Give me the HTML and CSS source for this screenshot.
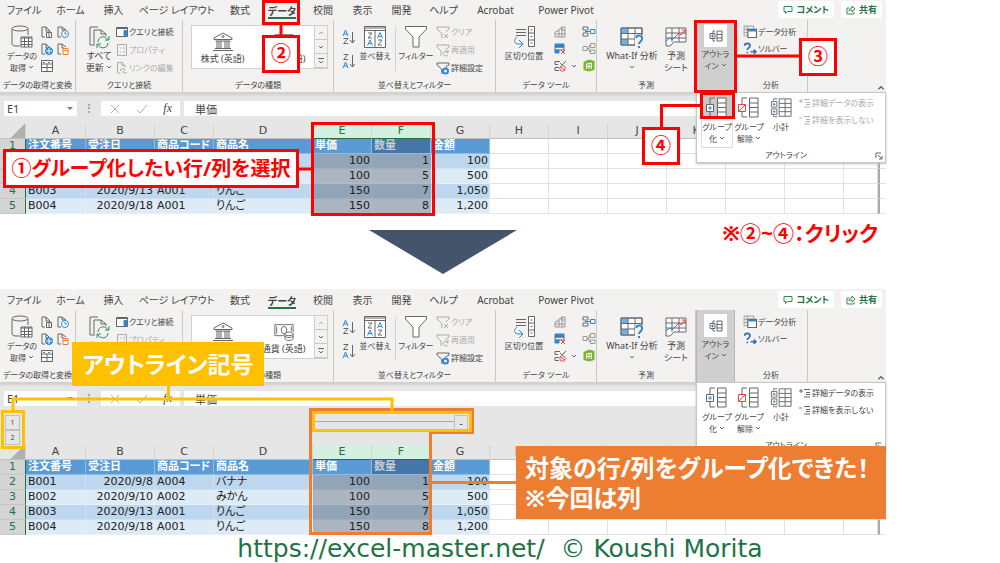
FILE: index.html
```html
<!DOCTYPE html>
<html lang="ja">
<head>
<meta charset="utf-8">
<title>Excel グループ化</title>
<link rel="stylesheet" href="styles.css">
</head>
<body>
<svg class="sprite" aria-hidden="true">
  <symbol id="i-chev" viewBox="0 0 6 6"><path d="M1 2l2 2 2-2"/></symbol>
  <symbol id="i-db" viewBox="0 0 24 24"><path d="M10 21H6c-3 0-4-1-4-3V4M18 4v6" /><ellipse cx="10" cy="3.500" rx="8" ry="2.500"/><path class="w" d="M11 12h11v10H11z"/><path d="M11 13h11M11 16.500h11M11 19.500h11M14.500 12v10M18.500 12v10"/></symbol>
  <symbol id="i-doc" viewBox="0 0 12 12"><path d="M4 11H1V1h4l4 4v1M5 1v4h4"/><path class="w" d="M5.500 6.500h5v5h-5zM7 8h2M7 10h2"/></symbol>
  <symbol id="i-docclock" viewBox="0 0 12 12"><path d="M4 11H1V1h4l4 3M5 1v3h3"/><circle class="bl w" cx="8" cy="8" r="3.500"/><path class="bl" d="M8 6v2h2"/></symbol>
  <symbol id="i-docweb" viewBox="0 0 12 12"><path d="M4 11H1V1h4l4 4M5 1v4h4"/><circle class="fb" cx="8" cy="8" r="3.500"/><path class="wl" d="M5 8h6M8 5v6"/></symbol>
  <symbol id="i-docdb" viewBox="0 0 12 12"><path d="M4 11H1V1h4l4 3M5 1v4h2"/><path class="or w" d="M6 5.500h5v6H6zM6 7.500h5"/></symbol>
  <symbol id="i-grid" viewBox="0 0 12 12"><path class="w" d="M.5.5h11v11H.5z"/><path d="M.5 4h11M.5 7.500h11M6 4v7.500"/><path class="bl" d="M2 2.500h2M7 2.500h2"/></symbol>
  <symbol id="i-refresh" viewBox="0 0 24 24"><path d="M6 20H3V2h8M7 21V5h7l5 4v2M14 5v4h5"/><path class="gr" d="M11 17c0-6 8-7 10-2M22 11v4h-4M21 18c0 6-8 6-10 2M10 23v-4h4"/></symbol>
  <symbol id="i-pane" viewBox="0 0 12 12"><path class="w" d="M.5 1.500h11v9H.5z"/><path d="M.5 2.500h11"/><path class="fb" d="M8 4.500h2.500v5H8z"/></symbol>
  <symbol id="i-prop" viewBox="0 0 12 12"><path d="M1.500.5h9v11h-9zM4 4h1M4 8h1M7 4h2M7 8h2"/></symbol>
  <symbol id="i-link" viewBox="0 0 12 12"><path d="M4 11H1.500V.5H6l3 3v2M6 .5v3h3M5 9a2 1.500 0 1 1 3 0M7 9a2 1.500 0 1 0 4 1"/></symbol>
  <symbol id="i-bank" viewBox="0 0 22 20"><path d="M2 6l9-5 9 5v1.500H2zM3.500 9h15M5 9v7M9 9v7M13 9v7M17 9v7M3 16.500h16M1 18.500h20M7 9v7M15 9v7"/><circle cx="11" cy="4.500" r="1"/></symbol>
  <symbol id="i-money" viewBox="0 0 24 20"><path d="M12 14H2V2h20v8M4 4v8M20 4v5"/><ellipse cx="12" cy="8" rx="3" ry="4"/><path class="w" d="M13 12v5c0 3 9 3 9 0v-5"/><ellipse class="w" cx="17.500" cy="12" rx="4.500" ry="2"/><path d="M13 14.500c1 2 8 2 9 0"/></symbol>
  <symbol id="i-az" viewBox="0 0 14 16"><path class="bl" d="M1 7l2.500-6L6 7M2 5h3"/><path d="M1.500 9.500H6l-4.500 5H6M10.500 3v11M8 11l2.500 3 2.500-3"/></symbol>
  <symbol id="i-za" viewBox="0 0 14 16"><path class="bl" d="M1 15l2.500-6L6 15M2 13h3"/><path d="M1.500 1.500H6l-4.500 5H6M10.500 2v12M8 11l2.500 3 2.500-3"/></symbol>
  <symbol id="i-sort" viewBox="0 0 22 22"><path class="w" d="M.5.5h21v21H.5z"/><path d="M.5 2h21M.5 4.500h21M11 4v17M4 7h4l-4 5h4M14 14h4l-4 5h4"/><path class="bl" d="M3.500 19.500L6 14l2.500 5.500M4.500 17.500h3M13.500 12L16 6.500l2.500 5.500M14.500 10.500h3"/></symbol>
  <symbol id="i-filter" viewBox="0 0 24 24"><path class="w" d="M1.500 1.500h21V4L15 12v10H9V12L1.500 4z"/></symbol>
  <symbol id="i-fclear" viewBox="0 0 14 13"><path d="M6 12L5.500 7 1 3V1h12v2L9.500 6M8 8l4 4M12 8l-4 4"/></symbol>
  <symbol id="i-fre" viewBox="0 0 14 13"><path d="M5 12V7L1 3V1h12v2L9.500 5.500M12 8a2.500 2.500 0 1 0 0 3M12 6v2.500h-2"/></symbol>
  <symbol id="i-fset" viewBox="0 0 14 13"><path d="M6 12L5.500 7 1 3V1h12v2L9.500 5"/><circle class="bl2" cx="9.500" cy="9" r="2.500"/></symbol>
  <symbol id="i-split" viewBox="0 0 24 24"><path d="M4 4.500h10M4 7.500h10M4 10.500h10"/><path class="w" d="M16.500 1.500h6v20h-6zM16.500 8h6M16.500 15h6"/><path d="M18.500 5h2M18.500 11.500h2M18.500 18h2"/><path class="bl" d="M5 12c-4 3-3 7 2 7h3M7 15l4 4-4 4"/></symbol>
  <symbol id="i-flash" viewBox="0 0 12 12"><path class="md" d="M4 4L8 1l-1 3h4v7H1V6l3-1zM1 8h10M5 4v7M8 1v10M8 1h3v3"/></symbol>
  <symbol id="i-dup" viewBox="0 0 12 12"><path class="fb" d="M1 1h9v3H1z"/><path d="M1 4h9v3H1z"/><path class="fb" d="M1 7h4v3H1z"/><path class="rd" d="M7 7l4 4M11 7l-4 4"/></symbol>
  <symbol id="i-valid" viewBox="0 0 12 12"><path d="M6 1.500H1v3h3M5 7.500H1v3h4"/><path class="gr" d="M6 3l2 2 4-4"/><circle class="rd w" cx="8.500" cy="8.500" r="2.700"/><path class="rd" d="M6.500 7l4 3"/></symbol>
  <symbol id="i-merge" viewBox="0 0 14 12"><path class="w" d="M1 1.500h5v3H1zM1 7.500h5v3H1z"/><path class="bl" d="M8.500 4h4.500v4H8.500zM3 6h5"/></symbol>
  <symbol id="i-rel" viewBox="0 0 14 12"><path class="md" d="M1 4h4v4H1zM8.500 1H13v4H8.500zM8.500 7.500H13V11H8.500zM5 6h2V3h1.500M7 6v3h1.500"/></symbol>
  <symbol id="i-model" viewBox="0 0 13 13"><path class="fg" d="M6.500.5L12 2v9l-5.500 1.500L1 11V3z"/><path class="wl" d="M4 10V5l5-1v6M4 7.500h5M6.500 4.500V10"/></symbol>
  <symbol id="i-whatif" viewBox="0 0 24 24"><path class="w" d="M1 3h21v17H1z"/><path class="lb" d="M1 3h7v5.500H1zM1 14h7v6H1z"/><path d="M1 3h21v17H1zM8 3v17M15 3v17M1 8.500h21M1 14h21"/><path class="wh" d="M15 10h9v14h-9z"/><path class="bl2" d="M16 13c1-4 7-3 6 1 0 2-3 3-3 5M19 21v2"/></symbol>
  <symbol id="i-forecast" viewBox="0 0 22 22"><path class="w" d="M1 2h20v14H9l-4 4H1zM1 7h20M1 12h20M7 2v14M14 2v14"/><path class="bl" d="M1 15l4-3 2 2 4-4"/><path class="rd" d="M11 10l3-3 2 2 4-5M16.500 4H20v3.500"/></symbol>
  <symbol id="i-outline" viewBox="0 0 14 12"><path d="M4 3V1h2M4 9v2h2M8 1h5v10H8zM8 4.500h5M8 8h5"/><path class="w" d="M1 3.500h5v5H1z"/><path class="bl" d="M2 6h3M3.500 4.500v3"/></symbol>
  <symbol id="i-group" viewBox="0 0 22 22"><path d="M4 7V1h5M4 15v5h5"/><path class="w" d="M11.500 1H20v19h-8.500zM11.500 6H20M11.500 10.500H20M11.500 15H20"/><path class="w" d="M.5 7.500h7v7h-7z"/><path class="bl" d="M2 11h4M4 9v4"/></symbol>
  <symbol id="i-ungroup" viewBox="0 0 22 22"><path d="M4 7V1h5M4 15v5h5"/><path class="w" d="M11.500 1H20v19h-8.500zM11.500 6H20M11.500 10.500H20M11.500 15H20"/><path class="w rd" d="M.5 7.500h7v7h-7zM.5 14.500l7-7"/></symbol>
  <symbol id="i-subtotal" viewBox="0 0 24 22"><path d="M4 3V1h4M4 19v1.500h4"/><path class="w" d="M10 1h13v19H10zM10 6h13M10 10.500h13M10 15h13M16.500 1v19"/><path class="w" d="M1.500 4h6v6h-6zM1.500 12h6v6h-6z"/><path class="bl" d="M3 7h3M4.500 5.500v3M3 15h3M4.500 13.500v3"/></symbol>
  <symbol id="i-show" viewBox="0 0 12 10"><path d="M5 1.500h6M7 4.500h4M7 6.500h4M5 9h6"/><path class="gr" d="M0 3h4M2 1v4"/></symbol>
  <symbol id="i-hide" viewBox="0 0 12 10"><path d="M5 1.500h6M7 4.500h4M7 6.500h4M5 9h6"/><path class="rd" d="M0 3h3"/></symbol>
  <symbol id="i-analysis" viewBox="0 0 13 12"><path class="lt" d="M1 1h9v9H1zM1 4h9M4 1v9M1 7h9"/><path class="w" d="M4.500 4h8v7.500h-8z"/><path class="bl2" d="M5 5h7"/></symbol>
  <symbol id="i-solver" viewBox="0 0 13 12"><path class="nb" d="M1.500 3.500c0-3 5-3 5 0 0 2-2.500 2-2.500 4M4 9v1.500M7 9h5M10 7l2 2-2 2"/></symbol>
  <symbol id="i-comment" viewBox="0 0 10 10"><path class="gr" d="M1 1.500h8v5H4.500L2.500 8.500v-2H1z"/></symbol>
  <symbol id="i-share" viewBox="0 0 10 10"><path class="gr" d="M3 3H1v6h7V7M3 6c0-2 1-3 3-3V1l3 3-3 3V5C5 5 4 5 3 6z"/></symbol>
  <symbol id="i-launch" viewBox="0 0 8 8"><path d="M1 6V1h5M3 3l4 4M7 4v3H4"/></symbol>
  <symbol id="i-x" viewBox="0 0 12 12"><path class="mid" d="M2 2l8 8M10 2l-8 8"/></symbol>
  <symbol id="i-check" viewBox="0 0 12 12"><path class="mid" d="M1 7l3 3 7-8"/></symbol>
  <symbol id="i-more" viewBox="0 0 6 8"><path d="M0 1.500h6M1 4l2 2 2-2"/></symbol>
  <symbol id="i-up" viewBox="0 0 6 6"><path d="M1 4l2-2 2 2"/></symbol>
</svg>

<template id="excel">
  <div class="tabbar">
    <nav class="tabs">
      <button>ファイル</button><button>ホーム</button><button>挿入</button><button>ページ レイアウト</button><button>数式</button><button class="current"><span>データ</span></button><button>校閲</button><button>表示</button><button>開発</button><button>ヘルプ</button><button>Acrobat</button><button>Power Pivot</button>
    </nav>
    <div class="actions">
      <button><svg class="s10"><use href="#i-comment"/></svg>コメント</button>
      <button><svg class="s10"><use href="#i-share"/></svg>共有</button>
    </div>
  </div>
  <div class="ribbon">
    <section class="group g-get">
      <div class="body">
        <button class="big"><svg class="s24"><use href="#i-db"/></svg><span>データの<br>取得 <svg class="s6"><use href="#i-chev"/></svg></span></button>
        <div class="minis">
          <svg class="s12"><use href="#i-doc"/></svg><svg class="s12"><use href="#i-docclock"/></svg>
          <svg class="s12"><use href="#i-docweb"/></svg><svg class="s12"><use href="#i-docdb"/></svg>
          <svg class="s12"><use href="#i-grid"/></svg>
        </div>
      </div>
      <h2>データの取得と変換</h2>
    </section>
    <section class="group g-query">
      <div class="body">
        <button class="big"><svg class="s24"><use href="#i-refresh"/></svg><span>すべて<br>更新 <svg class="s6"><use href="#i-chev"/></svg></span></button>
        <div class="rows">
          <button><svg class="s12"><use href="#i-pane"/></svg>クエリと接続</button>
          <button disabled><svg class="s12"><use href="#i-prop"/></svg>プロパティ</button>
          <button disabled><svg class="s12"><use href="#i-link"/></svg>リンクの編集</button>
        </div>
      </div>
      <h2>クエリと接続</h2>
    </section>
    <section class="group g-types">
      <div class="body">
        <div class="gallery">
          <button class="tile"><svg class="s22"><use href="#i-bank"/></svg>株式 (英語)</button>
          <button class="tile"><svg class="s22"><use href="#i-money"/></svg>通貨 (英語)</button>
          <div class="scroll"><button disabled aria-label="上へ"><svg class="s6"><use href="#i-up"/></svg></button><button aria-label="下へ"><svg class="s6"><use href="#i-chev"/></svg></button><button aria-label="その他"><svg class="s6x8"><use href="#i-more"/></svg></button></div>
        </div>
      </div>
      <h2>データの種類</h2>
    </section>
    <section class="group g-sort">
      <div class="body">
        <div class="sorts"><button aria-label="昇順"><svg class="s14"><use href="#i-az"/></svg></button><button aria-label="降順"><svg class="s14"><use href="#i-za"/></svg></button></div>
        <button class="big w38"><svg class="s22"><use href="#i-sort"/></svg><span>並べ替え</span></button>
        <i class="rule"></i>
        <button class="big w38"><svg class="s24"><use href="#i-filter"/></svg><span>フィルター</span></button>
        <div class="rows">
          <button disabled><svg class="s14x13"><use href="#i-fclear"/></svg>クリア</button>
          <button disabled><svg class="s14x13"><use href="#i-fre"/></svg>再適用</button>
          <button><svg class="s14x13"><use href="#i-fset"/></svg>詳細設定</button>
        </div>
      </div>
      <h2>並べ替えとフィルター</h2>
    </section>
    <section class="group g-tools">
      <div class="body">
        <button class="big"><svg class="s24"><use href="#i-split"/></svg><span>区切り位置</span></button>
        <div class="minis wide">
          <svg class="s12"><use href="#i-flash"/></svg><i></i><svg class="s14x13"><use href="#i-merge"/></svg>
          <svg class="s12"><use href="#i-dup"/></svg><i></i><svg class="s14x13"><use href="#i-rel"/></svg>
          <svg class="s12"><use href="#i-valid"/></svg><svg class="s6"><use href="#i-chev"/></svg><svg class="s14x13"><use href="#i-model"/></svg>
        </div>
      </div>
      <h2>データ ツール</h2>
    </section>
    <section class="group g-forecast">
      <div class="body">
        <button class="big w56"><svg class="s24"><use href="#i-whatif"/></svg><span>What-If 分析<br><svg class="s6"><use href="#i-chev"/></svg></span></button>
        <button class="big"><svg class="s22"><use href="#i-forecast"/></svg><span>予測<br>シート</span></button>
      </div>
      <h2>予測</h2>
    </section>
    <button class="outline"><span class="plate"><svg class="s14"><use href="#i-outline"/></svg></span><span>アウトラ<br>イン <svg class="s6"><use href="#i-chev"/></svg></span></button>
    <section class="group g-analysis">
      <div class="body">
        <div class="rows">
          <button><svg class="s14x13"><use href="#i-analysis"/></svg>データ分析</button>
          <button><svg class="s14x13"><use href="#i-solver"/></svg>ソルバー</button>
        </div>
      </div>
      <h2>分析</h2>
    </section>
    <button class="collapse" aria-label="リボンを折りたたむ"><svg class="s8"><use href="#i-up"/></svg></button>
    <div class="menu">
      <div class="menu-items">
        <button class="m-group"><svg class="s22"><use href="#i-group"/></svg><span>グループ<br>化 <svg class="s6"><use href="#i-chev"/></svg></span></button>
        <button><svg class="s22"><use href="#i-ungroup"/></svg><span>グループ<br>解除 <svg class="s6"><use href="#i-chev"/></svg></span></button>
        <button><svg class="s22"><use href="#i-subtotal"/></svg><span>小計</span></button>
        <div class="details">
          <button><svg class="s12"><use href="#i-show"/></svg>詳細データの表示</button>
          <button><svg class="s12"><use href="#i-hide"/></svg>詳細を表示しない</button>
        </div>
      </div>
      <div class="menu-foot"><i></i><span>アウトライン</span><svg class="s8"><use href="#i-launch"/></svg></div>
    </div>
  </div>
  <div class="formula">
    <div class="namebox"><input value="E1" aria-label="名前ボックス"><i class="drop"></i></div>
    <i class="dots"></i>
    <div class="fx"><svg class="s12"><use href="#i-x"/></svg><svg class="s12"><use href="#i-check"/></svg><em>fx</em></div>
    <input class="value" value="単価" aria-label="数式バー">
  </div>
</template>

<template id="cells">
  <table class="sheet">
    <colgroup><col class="c-no"><col class="c-a"><col class="c-b"><col class="c-c"><col class="c-d"><col class="c-n"><col class="c-n"><col class="c-n"><col class="c-n"><col class="c-n"><col class="c-n"><col class="c-n"><col class="c-n"><col class="c-n"><col><col class="c-end"></colgroup>
    <thead><tr><th class="corner"><th>A<th>B<th>C<th>D<th class="on">E<th class="on">F<th>G<th>H<th>I<th>J<th>K<th>L<th>M<th><th></tr></thead>
    <tbody>
      <tr class="head"><th>1<td>注文番号<td>受注日<td>商品コード<td>商品名<td>単価<td class="sel">数量<td>金額<td><td><td><td><td><td><td><td class="end"></tr>
      <tr class="dark"><th>2<td>B001<td class="r">2020/9/8<td>A004<td>バナナ<td class="r sel">100<td class="r sel">1<td class="r">100<td><td><td><td><td><td><td><td class="end"></tr>
      <tr class="light"><th>3<td>B002<td class="r">2020/9/10<td>A002<td>みかん<td class="r sel">100<td class="r sel">5<td class="r">500<td><td><td><td><td><td><td><td class="end"></tr>
      <tr class="dark"><th>4<td>B003<td class="r">2020/9/13<td>A001<td>りんご<td class="r sel">150<td class="r sel">7<td class="r">1,050<td><td><td><td><td><td><td><td class="end"></tr>
      <tr class="light"><th>5<td>B004<td class="r">2020/9/18<td>A001<td>りんご<td class="r sel">150<td class="r sel">8<td class="r">1,200<td><td><td><td><td><td><td><td class="end"></tr>
    </tbody>
  </table>
</template>

<main>
  <div class="content">
    <section class="shot before">
      <div data-part="excel"></div>
      <div data-part="cells"></div>
      <div class="notes">
        <svg class="wires red"><path d="M281 24v12M736 56h64M701 105.500h-39.500V128M298 169h14"/></svg>
        <div class="frame f-tab"></div>
        <div class="frame f-outline"></div>
        <div class="frame f-group"></div>
        <div class="frame f-cells"></div>
        <div class="label num n2">②</div>
        <div class="label num n3">③</div>
        <div class="label num n4">④</div>
        <div class="label n1">①グループ化したい行/列を選択</div>
      </div>
    </section>

    <div class="between">
      <svg class="arrow" viewBox="0 0 148 44"><path d="M0 0h148L74 44z"/></svg>
      <p>※②~④：クリック</p>
    </div>

    <section class="shot after">
      <div data-part="excel"></div>
      <div class="levels">
        <div class="level-buttons"><button>1</button><button>2</button></div>
        <div class="bracket"><i></i><button>-</button></div>
      </div>
      <div data-part="cells"></div>
      <div class="notes">
        <svg class="wires orange"><path d="M310.500 120.500h162v23h-42v101h-120zM430 193.500h90"/></svg>
        <div class="frame f-levels"></div>
        <div class="frame f-bracket"></div>
        <svg class="wires yellow"><path d="M13 122v-12h379v14M168.500 96v15"/></svg>
        <div class="label symbol">アウトライン記号</div>
        <div class="label done">対象の行/列をグループ化できた！<br>※今回は列</div>
      </div>
    </section>
  </div>
  <footer>https://excel-master.net/&nbsp; © Koushi Morita</footer>
</main>
<script src="app.js"></script>
</body>
</html>
```
FILE: app.js
```js
document.querySelectorAll('[data-part]').forEach(function (slot) {
  var source = document.getElementById(slot.dataset.part);
  slot.replaceWith(source.content.cloneNode(true));
});
document.querySelectorAll('.before .details button').forEach(function (button) {
  button.disabled = true;
});
```
FILE: styles.css
```css
* { box-sizing: border-box; }
body { margin: 0; background: #fff; color: #444; font: 10px/12px "Noto Sans", "Noto Sans CJK JP", sans-serif; font-feature-settings: "palt"; }
button, input { margin: 0; padding: 0; border: 0; background: none; color: inherit; font: inherit; font-feature-settings: inherit; white-space: nowrap; }
h2, p { margin: 0; }
svg { display: block; flex: none; fill: none; stroke: #666; stroke-width: 1; }
.sprite { position: absolute; width: 0; height: 0; }
.w { fill: #fff; }
.wh { fill: #f3f2f1; stroke: none; }
.lt { stroke: #aaa; }
.md { stroke: #999; }
.mid { stroke: #b0b0b0; }
.bl { stroke: #2b88d8; }
.bl2 { stroke: #2b88d8; stroke-width: 2; }
.nb { stroke: #2f6eb0; stroke-width: 1.5; }
.fb { fill: #2b88d8; stroke: #2b88d8; }
.lb { fill: #6db3ea; stroke: none; }
.fg { fill: #76b82a; stroke: none; }
.wl { stroke: #fff; }
.or { stroke: #ed7d31; }
.gr { stroke: #2e8b57; }
.rd { stroke: #f04040; }
.s6 { width: 6px; height: 6px; }
.s6x8 { width: 6px; height: 8px; }
.s8 { width: 8px; height: 8px; }
.s10 { width: 10px; height: 10px; }
.s12 { width: 12px; height: 12px; }
.s14 { width: 14px; height: 16px; }
.s14x13 { width: 14px; height: 13px; }
.s22 { width: 22px; height: 24px; }
.s24 { width: 24px; height: 24px; }
span > .s6 { display: inline-block; vertical-align: 1px; }

.content { width: 88.6%; }
.shot { position: relative; background: #e6e6e6; }
.after { padding-top: 1px; background-image: linear-gradient(#f3f2f1 1px, transparent 1px); }

.tabbar { display: flex; justify-content: space-between; height: 20px; padding-right: 4px; background: #f3f2f1; }
.tabs { display: grid; grid-template-columns: 48px 45px 41px 85px 42px 42px 40px 39px 39px 45px 59px 82px; }
.tabs button { display: flex; justify-content: center; align-items: center; }
.tabs .current { font-weight: 700; }
.current span { padding-top: 3px; border-bottom: 2px solid #217346; }
.actions { display: flex; gap: 7px; padding: 1px 0 2px; }
.actions button { display: flex; align-items: center; gap: 3px; padding: 0 5px; border-radius: 2px; background: #fff; color: #217346; font-size: 9px; font-weight: 700; }

.ribbon { position: relative; display: flex; height: 72px; background: #f3f2f1; }
.group { display: flex; flex-direction: column; padding: 3px 0 0 8px; border-right: 1px solid #c8c8c8; }
.group .body { display: flex; height: 55px; }
.group h2 { margin-left: -8px; font-size: 8px; font-weight: 400; line-height: 13px; text-align: center; white-space: nowrap; }
.g-get { width: 76px; padding-left: 5px; }
.g-get h2 { margin-left: -5px; }
.g-query { width: 107px; }
.g-types { width: 151px; }
.g-sort { width: 162px; }
.g-tools { width: 101px; }
.g-forecast { width: 99px; }
.g-analysis { width: 73px; }
.big { display: flex; flex-direction: column; align-items: center; width: 34px; padding-top: 2px; font-size: 9px; text-align: center; }
.big > span { padding-top: 1px; line-height: 12px; }
.w38 { width: 38px; font-size: 8px; }
.w56 { width: 54px; }
.minis { display: grid; grid-template-columns: 12px 12px; grid-auto-rows: 17px; gap: 0 4px; align-items: center; padding: 0 0 0 2px; }
.minis.wide { grid-template-columns: 12px 6px 14px; gap: 0 5px; padding-left: 8px; }
.g-tools .big { width: 44px; margin-left: -2px; }
.g-tools .big, .g-get .big { font-size: 8px; }
.rows { display: flex; flex-direction: column; }
.rows button { display: flex; align-items: center; gap: 1px; height: 18px; font-size: 8px; }
.g-query .big { width: 30px; }
.g-query .rows { padding-left: 2px; }
button:disabled { color: #aaa; }
button:disabled svg { opacity: .5; }
.gallery { display: flex; width: 137px; height: 44px; margin-top: 2px; border: 1px solid #d0d0d0; background: #fff; }
.tile { display: flex; flex: none; flex-direction: column; align-items: center; width: 61px; padding-top: 5px; font-size: 9px; }
.tile svg { height: 22px; }
.scroll { display: flex; flex-direction: column; width: 14px; border-left: 1px solid #d0d0d0; background: #f3f2f1; }
.scroll button { display: flex; flex: 1; justify-content: center; align-items: center; border-bottom: 1px solid #c8c8c8; }
.sorts { display: flex; flex-direction: column; gap: 8px; padding: 6px 0; }
.sorts button { height: 16px; }
.rule { width: 1px; height: 44px; margin: 4px 1px 0; background: #d0d0d0; }
.g-sort .rows { padding-left: 1px; }
.outline { display: flex; flex-direction: column; align-items: center; width: 39px; padding-top: 4px; border: 1px solid #b5b5b5; border-width: 0 1px; background: #cfcfcf; font-size: 8px; }
.plate { display: flex; justify-content: center; align-items: center; width: 23px; height: 23px; margin-bottom: 1px; background: #fff; }
.g-analysis .rows button { height: 17px; }
.collapse { display: flex; flex: 1; justify-content: flex-end; align-items: flex-end; padding-right: 1px; }

.menu { position: absolute; top: 72px; right: 0; z-index: 1; width: 190px; border: 1px solid #c8c8c8; background: #fff; box-shadow: 0 1px 2px #bbb; }
.menu-items { display: flex; height: 55px; padding-left: 4px; }
.menu-items > button { display: flex; flex-direction: column; align-items: center; width: 32px; padding-top: 3px; font-size: 8px; }
.menu-items > button span { padding-top: 1px; }
.before .m-group { background: linear-gradient(#c8c8c8 26px, #fff 26px); box-shadow: inset 0 0 0 1px #ddd; }
.details { padding: 1px 0 0 2px; }
.details button { display: flex; align-items: center; gap: 1px; height: 17px; font-size: 8px; }
.details svg { height: 10px; }
.menu-foot { display: flex; justify-content: space-between; height: 14px; padding-right: 2px; font-size: 8px; line-height: 14px; }
.menu-foot svg { margin-top: 4px; }

.formula { display: flex; height: 32px; padding: 9px 0 8px 4px; background: linear-gradient(#cdcdcd, #dedede 4px, #e6e6e6 4px); }
.namebox { display: flex; align-items: center; width: 73px; padding: 0 4px 0 3px; background: #fff; }
.namebox input { flex: 1; min-width: 0; font-size: 11px; }
.drop { border: 3px solid transparent; border-top: 3px solid #777; border-bottom: 0; }
.dots { width: 2px; height: 9px; margin: 3px 11px; border-left: 2px dotted #aaa; }
.fx { display: flex; align-items: center; justify-content: space-between; width: 79px; padding: 0 8px; background: #fff; }
.fx em { font: italic 12px "Liberation Serif", serif; }
.value { flex: 1; min-width: 0; height: 15px; margin-left: 4px; padding-left: 11px; background: #fff; font-size: 11px; }

.sheet { width: 100%; border-spacing: 0; table-layout: fixed; color: #222; font-family: "DejaVu Sans", "Noto Sans CJK JP", sans-serif; font-size: 11px; line-height: 14px; }
.c-no { width: 26px; }
.c-a { width: 60px; }
.c-b { width: 69px; }
.c-c { width: 59px; }
.c-d { width: 99px; }
.c-n { width: 59px; }
.c-end { width: 8px; }
.sheet th { height: 15px; padding: 0; border-right: 1px solid #d4d4d4; font-weight: 400; color: #444; }
.sheet thead th { border-bottom: 1px solid #c0c0c0; }
.sheet thead .on { background: #d3f0e0; color: #217346; border-bottom-color: #217346; }
.corner { background: linear-gradient(135deg, transparent 62%, #b0b0b0 62%); }
.sheet tbody th { background: #d4d4d4; border-right: 1px solid #217346; border-bottom: 1px solid #c6c6c6; color: #217346; }
.sheet td { height: 15px; padding: 0 1px 0 2px; overflow: hidden; border-right: 1px solid #e2e2e2; border-bottom: 1px solid #e2e2e2; background: #fff; white-space: nowrap; }
.sheet .r { padding: 0 1px 0 0; text-align: right; }
.head td:nth-child(-n+8) { background: #5b9bd5; border-color: #8fbce4; color: #fff; font-weight: 700; }
.head td.sel:nth-child(-n+8) { background: #4576a8; color: #c4cdd6; }
.dark td:nth-child(-n+8) { background: #bdd7ee; border-color: #cde1f2; }
.light td:nth-child(-n+8) { background: #ddebf7; border-color: #e7f1f9; }
.dark td.sel:nth-child(-n+8) { background: #92a5b8; border-color: #9cadbe; }
.light td.sel:nth-child(-n+8) { background: #abb5bf; border-color: #b3bcc5; }
.sheet td.end { border-left: 2px solid #aaa; border-right: 0; }

.levels { display: flex; height: 31px; padding: 1px 0 0 5px; }
.level-buttons { display: flex; flex-direction: column; width: 15px; }
.level-buttons button { height: 15px; border: 1px solid #c0c0c0; font-size: 7px; line-height: 12px; }
.bracket { display: flex; width: 153px; height: 15px; margin-left: 295px; }
.bracket i { flex: 1; height: 7px; border-bottom: 1px solid #aaa; }
.bracket button { width: 14px; border: 1px solid #c0c0c0; }

.notes { position: absolute; inset: 0; z-index: 2; }
.wires { position: absolute; width: 100%; height: 100%; overflow: visible; stroke-width: 3; }
.red { stroke: #f00; }
.orange { stroke: #ed7d31; }
.yellow { stroke: #ffc000; }
.frame { position: absolute; border: 3px solid #f00; }
.f-tab { left: 262px; top: 0; width: 38px; height: 25px; }
.f-outline { left: 694px; top: 20px; width: 43px; height: 73px; }
.f-group { left: 700px; top: 92px; width: 35px; height: 27px; }
.f-cells { left: 311px; top: 122px; width: 124px; height: 94px; }
.f-levels { left: 1px; top: 121px; width: 24px; height: 39px; border-color: #ffc000; }
.f-bracket { left: 312px; top: 122px; width: 160px; height: 21px; border-color: #ffc000; }
.label { position: absolute; display: flex; justify-content: center; align-items: center; border: 3px solid #f00; background: #fff; color: #f00; font-weight: 700; font-size: 20px; line-height: 30px; white-space: nowrap; }
.num { width: 38px; height: 38px; }
.n2 { left: 262px; top: 35px; }
.n3 { left: 799px; top: 38px; }
.n4 { left: 642px; top: 127px; }
.n1 { left: 3px; top: 149px; width: 296px; height: 39px; }
.symbol { left: 72px; top: 53px; width: 192px; height: 44px; border: 0; background: #ffc000; color: #fff; font-size: 23px; }
.done { left: 516px; right: 0; top: 157px; display: block; height: 73px; padding: 7px 9px; border: 0; background: #ed7d31; color: #fff; font-size: 24px; }

.between { display: grid; grid-template-columns: 1fr 148px 1fr; height: 75px; padding-top: 16px; }
.arrow { grid-column: 2; width: 148px; height: 44px; fill: #44546a; stroke: none; }
.between p { grid-column: 3; padding-right: 8px; margin-top: -12px; color: #f00; font-size: 21px; font-weight: 700; line-height: 30px; text-align: right; white-space: nowrap; }
footer { color: #217346; font: 25px/28px "DejaVu Sans", sans-serif; text-align: center; white-space: nowrap; }
```
